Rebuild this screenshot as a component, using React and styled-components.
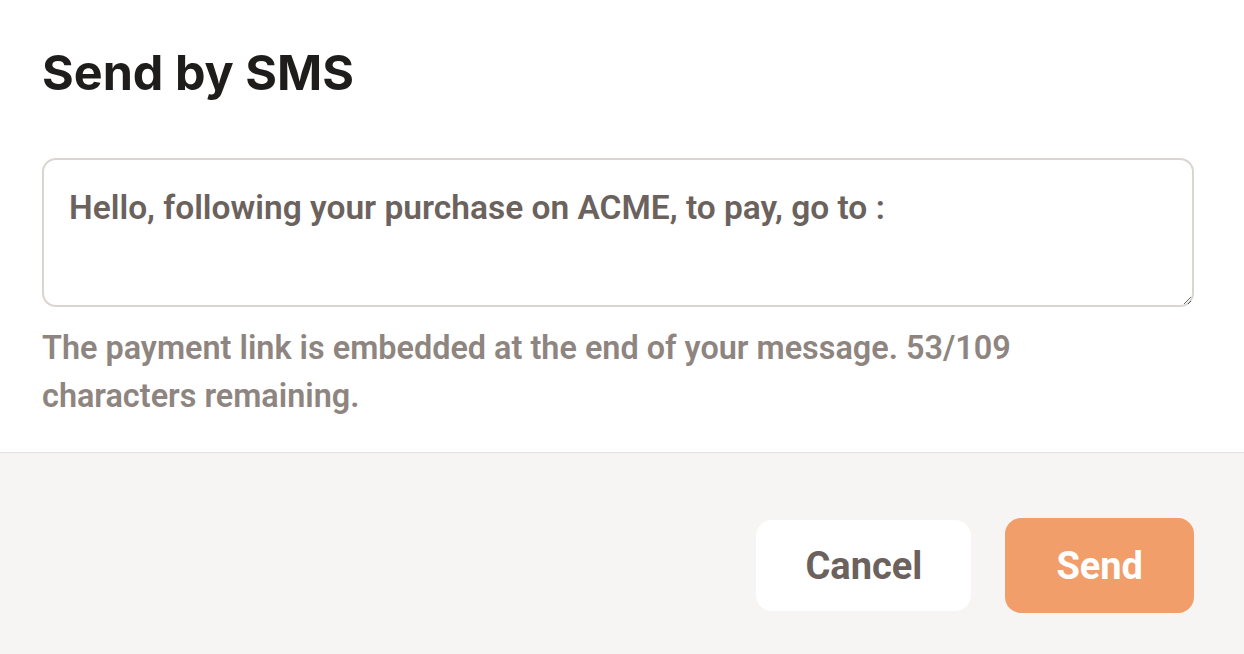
import styled, { createGlobalStyle } from 'styled-components';

const GlobalStyle = createGlobalStyle`
  html, body {
    margin: 0;
    padding: 0;
    background: #ffffff;
  }
  body {
    font-family: Roboto, "Liberation Sans", sans-serif;
  }
`;

const App = () => {
  const message = 'Hello, following your purchase on ACME, to pay, go to :';

  return <Modal>
    <GlobalStyle />
    <Body>
      <Title>Send by SMS</Title>
      <MessageBox defaultValue={message} />
      <Hint>
        The payment link is embedded at the end of your message. 53/109 characters remaining.
      </Hint>
    </Body>

    <Footer>
      <ButtonRow>
        <Button>Cancel</Button>
        <Button primary>Send</Button>
      </ButtonRow>
    </Footer>
  </Modal>
}
export default App;

const Modal = styled.div`
  display: flex;
  flex-direction: column;
  width: 1244px;
  height: 654px;
  overflow: hidden;
`;

const Body = styled.div`
  display: flex;
  flex-direction: column;
  padding: 44px 50px 0 42px;
  height: 452px;
  box-sizing: border-box;
`;

const Title = styled.h1`
  margin: 0;
  font-family: Inter, Roboto, sans-serif;
  font-size: 48.5px;
  line-height: 58px;
  font-weight: 700;
  color: #1f1d1c;
`;

const MessageBox = styled.textarea`
  margin-top: 56px;
  height: 149px;
  box-sizing: border-box;
  border: 2px solid #d9d5d1;
  border-radius: 14px;
  padding: 28px 25px 26px;
  font-family: Roboto, "Liberation Sans", sans-serif;
  font-size: 33.5px;
  line-height: 40px;
  font-weight: 600;
  color: #6b625e;
  outline: none;
  resize: vertical;
`;

const Hint = styled.p`
  margin: 17px 0 0;
  font-size: 32.4px;
  line-height: 48px;
  font-weight: 600;
  color: #8e8580;
  max-width: 1040px;
`;

const Footer = styled.div`
  flex: 1;
  display: flex;
  justify-content: flex-end;
  align-items: flex-start;
  padding: 65px 50px 0 0;
  background: #f6f5f3;
  border-top: 1px solid #e5e2de;
`;

const ButtonRow = styled.div`
  display: flex;
  align-items: center;
  gap: 34px;
`;

const Button = styled.button`
  height: ${p => (p.primary ? '95px' : '91px')};
  padding: 0 ${p => (p.primary ? '51px' : '49px')};
  border: none;
  border-radius: 16px;
  background: ${p => (p.primary ? '#f19e6a' : '#ffffff')};
  color: ${p => (p.primary ? '#ffffff' : '#6b625e')};
  font-family: Roboto, "Liberation Sans", sans-serif;
  font-size: 38px;
  font-weight: 700;
  cursor: pointer;
`;
